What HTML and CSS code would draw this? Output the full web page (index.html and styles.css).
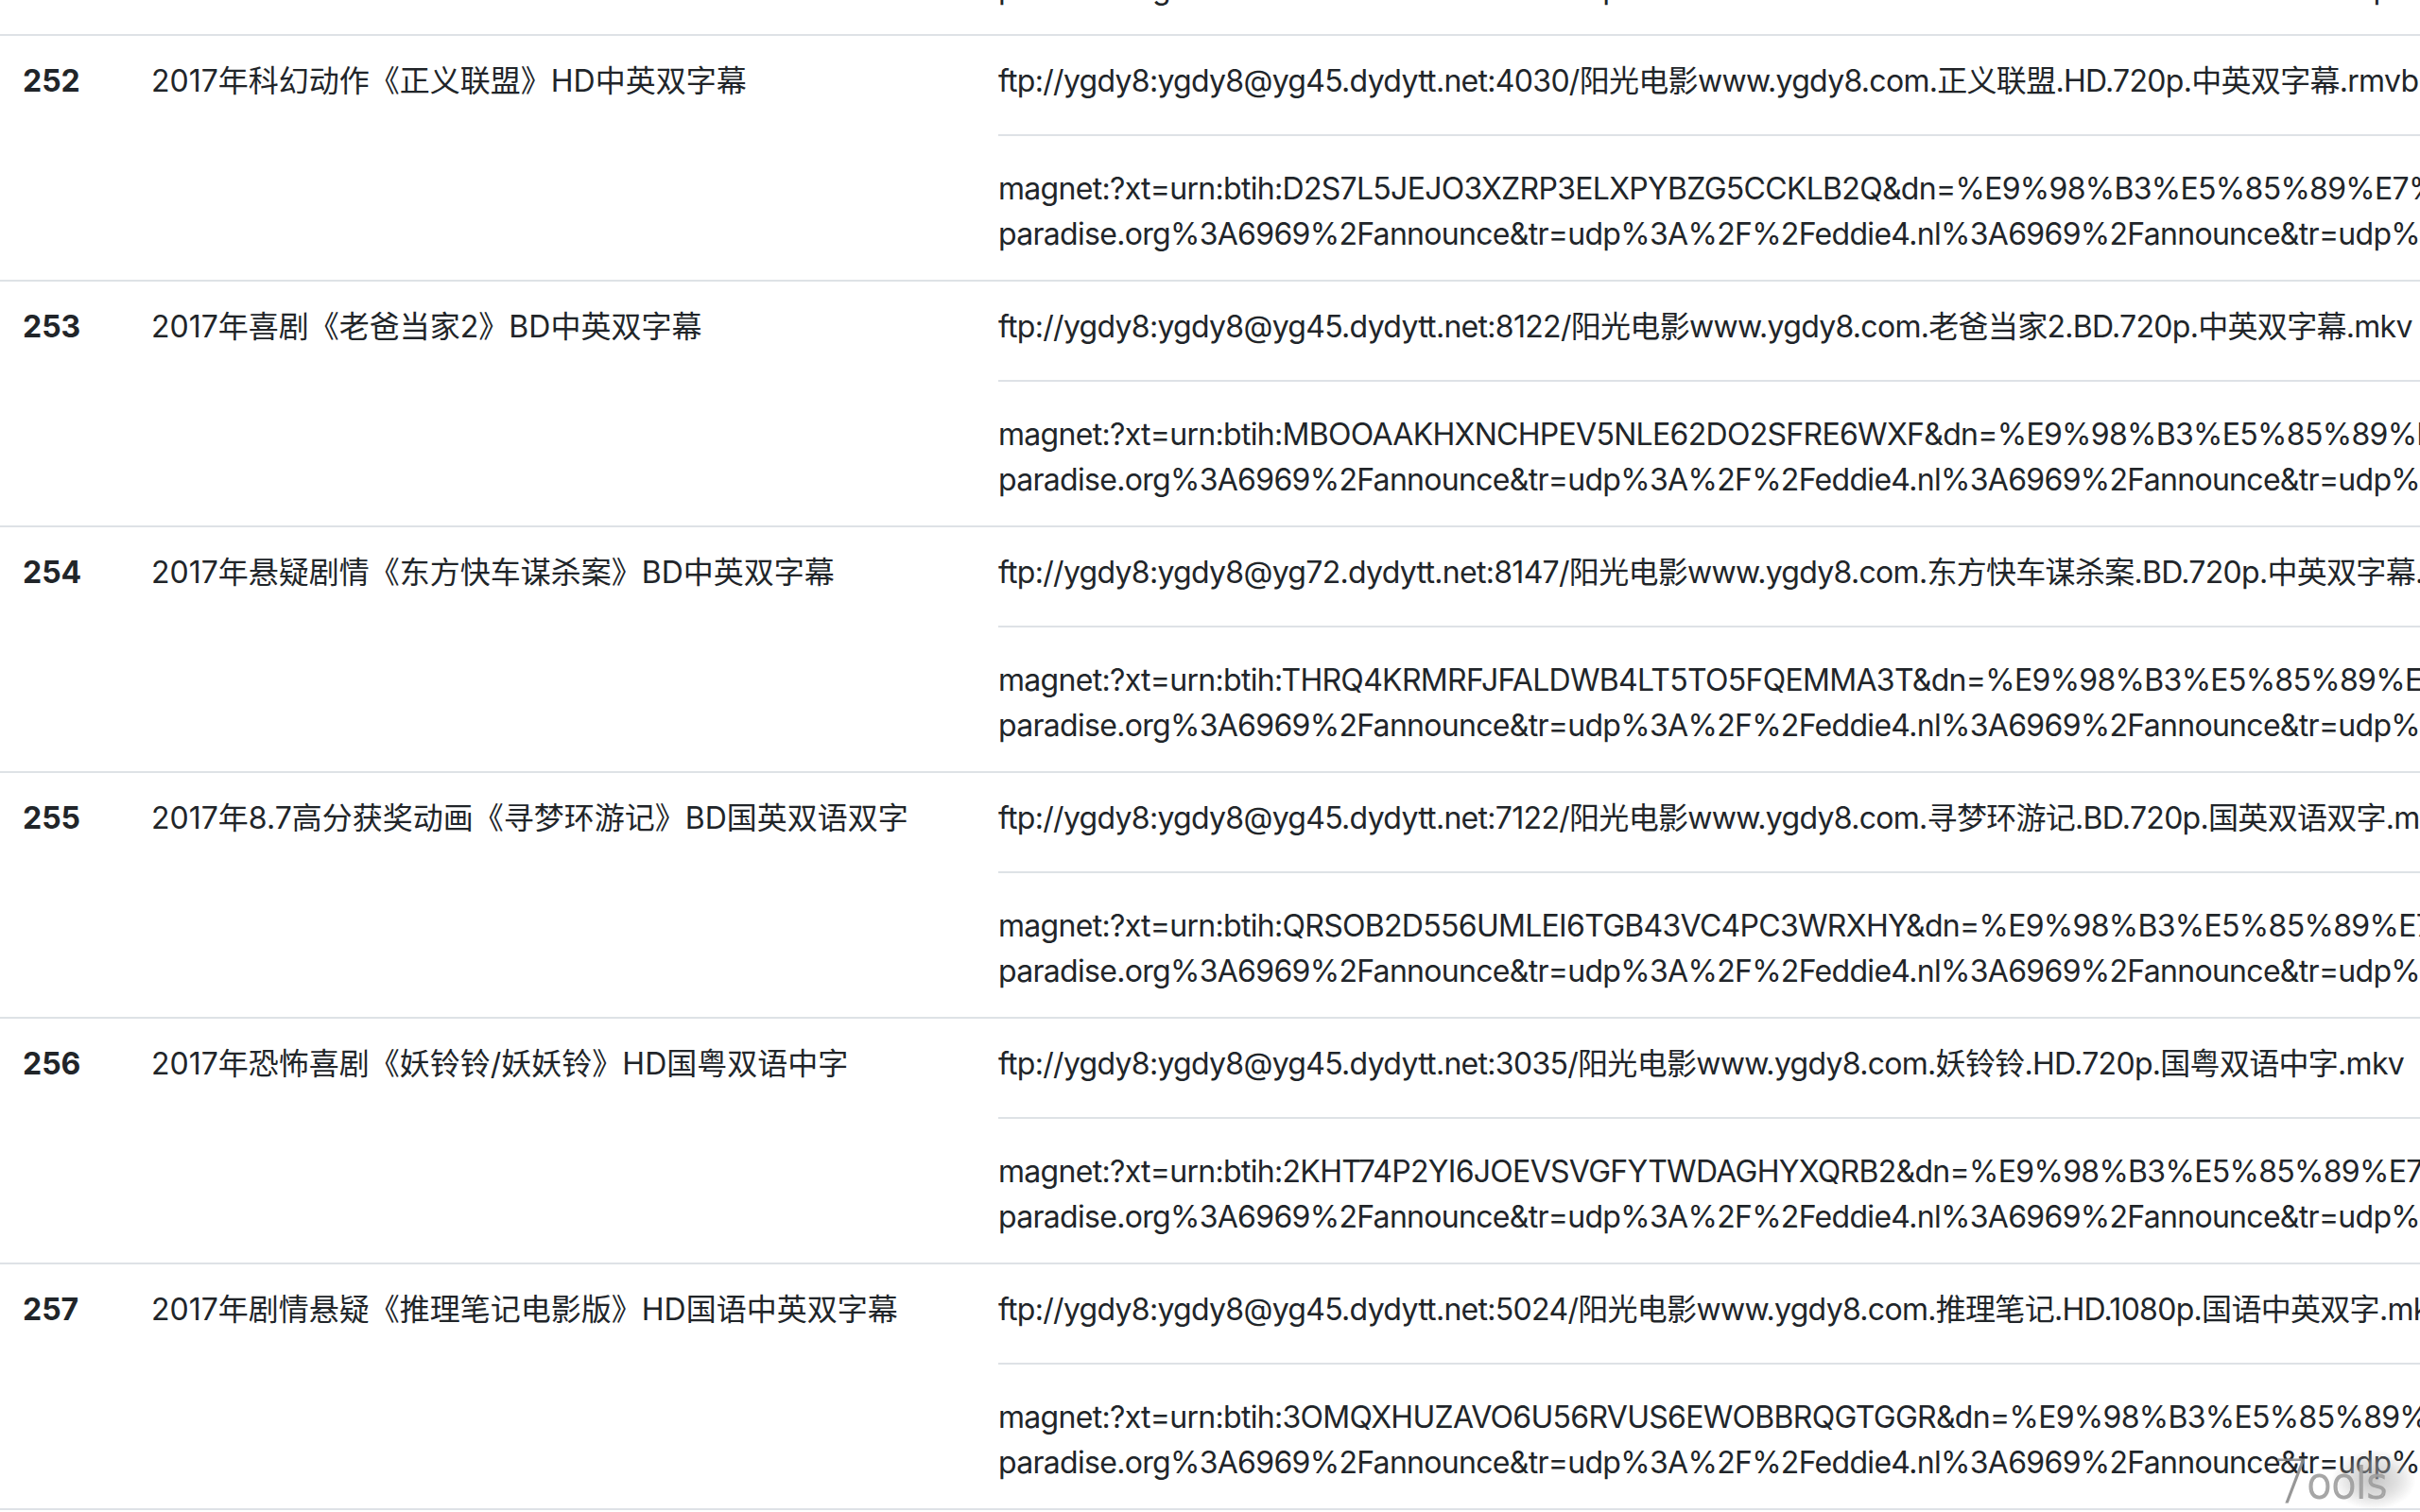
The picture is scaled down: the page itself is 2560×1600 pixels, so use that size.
FILE: index.html
```html
<!DOCTYPE html>
<html lang="zh-CN">
<head>
    <meta charset="UTF-8">
    <meta name="viewport" content="width=device-width, initial-scale=1.0">
    <title>电影下载列表</title>
    <link rel="stylesheet" href="styles.css">
</head>
<body>
    <div class="page">
        <table class="movies">
            <colgroup>
                <col class="col-num">
                <col class="col-title">
                <col class="col-links">
            </colgroup>
            <tbody>
                <tr>
                    <th>251</th>
                    <td>2017年动作奇幻《雷神3：诸神黄昏》HD中英双字幕</td>
                    <td class="links">
                        <div class="link">ftp://ygdy8:ygdy8@yg45.dydytt.net:4029/阳光电影www.ygdy8.com.雷神3：诸神黄昏.HD.720p.中英双字幕.mkv</div>
                        <div class="link">magnet:?xt=urn:btih:7YQ3LNZ4HFMB2WXKTJ6C5PRDEOVA4SGU&amp;dn=%E9%98%B3%E5%85%89%E7%94%B5%E5%BD%B1www.ygdy8.com.%E9%9B%B7%E7%A5%9E3.HD.720p.%E4%B8%AD%E8%8B%B1%E5%8F%8C%E5%AD%97%E5%B9%95.mkv&amp;tr=udp%3A%2F%2Ftracker.leechers-paradise.org%3A6969%2Fannounce&amp;tr=udp%3A%2F%2Feddie4.nl%3A6969%2Fannounce&amp;tr=udp%3A%2F%2Fp4p.arenabg.com%3A1337%2Fannounce</div>
                    </td>
                </tr>
                <tr>
                    <th>252</th>
                    <td>2017年科幻动作《正义联盟》HD中英双字幕</td>
                    <td class="links">
                        <div class="link">ftp://ygdy8:ygdy8@yg45.dydytt.net:4030/阳光电影www.ygdy8.com.正义联盟.HD.720p.中英双字幕.rmvb</div>
                        <div class="link">magnet:?xt=urn:btih:D2S7L5JEJO3XZRP3ELXPYBZG5CCKLB2Q&amp;dn=%E9%98%B3%E5%85%89%E7%94%B5%E5%BD%B1www.ygdy8.com.%E6%AD%A3%E4%B9%89%E8%81%94%E7%9B%9F.HD.720p.%E4%B8%AD%E8%8B%B1%E5%8F%8C%E5%AD%97%E5%B9%95.rmvb&amp;tr=udp%3A%2F%2Ftracker.leechers-paradise.org%3A6969%2Fannounce&amp;tr=udp%3A%2F%2Feddie4.nl%3A6969%2Fannounce&amp;tr=udp%3A%2F%2Fp4p.arenabg.com%3A1337%2Fannounce</div>
                    </td>
                </tr>
                <tr>
                    <th>253</th>
                    <td>2017年喜剧《老爸当家2》BD中英双字幕</td>
                    <td class="links">
                        <div class="link">ftp://ygdy8:ygdy8@yg45.dydytt.net:8122/阳光电影www.ygdy8.com.老爸当家2.BD.720p.中英双字幕.mkv</div>
                        <div class="link">magnet:?xt=urn:btih:MBOOAAKHXNCHPEV5NLE62DO2SFRE6WXF&amp;dn=%E9%98%B3%E5%85%89%E7%94%B5%E5%BD%B1www.ygdy8.com.%E8%80%81%E7%88%B8%E5%BD%93%E5%AE%B62.BD.720p.%E4%B8%AD%E8%8B%B1%E5%8F%8C%E5%AD%97%E5%B9%95.mkv&amp;tr=udp%3A%2F%2Ftracker.leechers-paradise.org%3A6969%2Fannounce&amp;tr=udp%3A%2F%2Feddie4.nl%3A6969%2Fannounce&amp;tr=udp%3A%2F%2Fp4p.arenabg.com%3A1337%2Fannounce</div>
                    </td>
                </tr>
                <tr>
                    <th>254</th>
                    <td>2017年悬疑剧情《东方快车谋杀案》BD中英双字幕</td>
                    <td class="links">
                        <div class="link">ftp://ygdy8:ygdy8@yg72.dydytt.net:8147/阳光电影www.ygdy8.com.东方快车谋杀案.BD.720p.中英双字幕.mkv</div>
                        <div class="link">magnet:?xt=urn:btih:THRQ4KRMRFJFALDWB4LT5TO5FQEMMA3T&amp;dn=%E9%98%B3%E5%85%89%E7%94%B5%E5%BD%B1www.ygdy8.com.%E4%B8%9C%E6%96%B9%E5%BF%AB%E8%BD%A6%E8%B0%8B%E6%9D%80%E6%A1%88.BD.720p.%E4%B8%AD%E8%8B%B1%E5%8F%8C%E5%AD%97%E5%B9%95.mkv&amp;tr=udp%3A%2F%2Ftracker.leechers-paradise.org%3A6969%2Fannounce&amp;tr=udp%3A%2F%2Feddie4.nl%3A6969%2Fannounce&amp;tr=udp%3A%2F%2Fp4p.arenabg.com%3A1337%2Fannounce</div>
                    </td>
                </tr>
                <tr>
                    <th>255</th>
                    <td>2017年8.7高分获奖动画《寻梦环游记》BD国英双语双字</td>
                    <td class="links">
                        <div class="link">ftp://ygdy8:ygdy8@yg45.dydytt.net:7122/阳光电影www.ygdy8.com.寻梦环游记.BD.720p.国英双语双字.mkv</div>
                        <div class="link">magnet:?xt=urn:btih:QRSOB2D556UMLEI6TGB43VC4PC3WRXHY&amp;dn=%E9%98%B3%E5%85%89%E7%94%B5%E5%BD%B1www.ygdy8.com.%E5%AF%BB%E6%A2%A6%E7%8E%AF%E6%B8%B8%E8%AE%B0.BD.720p.%E5%9B%BD%E8%8B%B1%E5%8F%8C%E8%AF%AD%E5%8F%8C%E5%AD%97.mkv&amp;tr=udp%3A%2F%2Ftracker.leechers-paradise.org%3A6969%2Fannounce&amp;tr=udp%3A%2F%2Feddie4.nl%3A6969%2Fannounce&amp;tr=udp%3A%2F%2Fp4p.arenabg.com%3A1337%2Fannounce</div>
                    </td>
                </tr>
                <tr>
                    <th>256</th>
                    <td>2017年恐怖喜剧《妖铃铃/妖妖铃》HD国粤双语中字</td>
                    <td class="links">
                        <div class="link">ftp://ygdy8:ygdy8@yg45.dydytt.net:3035/阳光电影www.ygdy8.com.妖铃铃.HD.720p.国粤双语中字.mkv</div>
                        <div class="link">magnet:?xt=urn:btih:2KHT74P2YI6JOEVSVGFYTWDAGHYXQRB2&amp;dn=%E9%98%B3%E5%85%89%E7%94%B5%E5%BD%B1www.ygdy8.com.%E5%A6%96%E9%93%83%E9%93%83.HD.720p.%E5%9B%BD%E7%B2%A4%E5%8F%8C%E8%AF%AD%E4%B8%AD%E5%AD%97.mkv&amp;tr=udp%3A%2F%2Ftracker.leechers-paradise.org%3A6969%2Fannounce&amp;tr=udp%3A%2F%2Feddie4.nl%3A6969%2Fannounce&amp;tr=udp%3A%2F%2Fp4p.arenabg.com%3A1337%2Fannounce</div>
                    </td>
                </tr>
                <tr>
                    <th>257</th>
                    <td>2017年剧情悬疑《推理笔记电影版》HD国语中英双字幕</td>
                    <td class="links">
                        <div class="link">ftp://ygdy8:ygdy8@yg45.dydytt.net:5024/阳光电影www.ygdy8.com.推理笔记.HD.1080p.国语中英双字.mkv</div>
                        <div class="link">magnet:?xt=urn:btih:3OMQXHUZAVO6U56RVUS6EWOBBRQGTGGR&amp;dn=%E9%98%B3%E5%85%89%E7%94%B5%E5%BD%B1www.ygdy8.com.%E6%8E%A8%E7%90%86%E7%AC%94%E8%AE%B0.HD.1080p.%E5%9B%BD%E8%AF%AD%E4%B8%AD%E8%8B%B1%E5%8F%8C%E5%AD%97.mkv&amp;tr=udp%3A%2F%2Ftracker.leechers-paradise.org%3A6969%2Fannounce&amp;tr=udp%3A%2F%2Feddie4.nl%3A6969%2Fannounce&amp;tr=udp%3A%2F%2Fp4p.arenabg.com%3A1337%2Fannounce</div>
                    </td>
                </tr>
            </tbody>
        </table>
    </div>

    <div class="watermark"><span class="splash"></span><span class="seven">7</span><span class="mark">ools</span></div>
</body>
</html>
```

FILE: styles.css
```css
html,
body {
    margin: 0;
    overflow: hidden;
    background: #fff;
}

body {
    font-family: Inter, "Noto Sans CJK SC", sans-serif;
    font-size: 32px;
    line-height: 48px;
    color: #212529;
}

/* 页面已向下滚动，上一行只露出一点 */
.page {
    margin-top: -224px;
}

.movies {
    border-collapse: collapse;
    table-layout: fixed;
    width: 7032px;
    border-bottom: 2px solid #dee2e6;
}

.col-num {
    width: 136px;
}

.col-title {
    width: 896px;
}

/* 磁力链接在 leechers- 处折行 */
.col-links {
    width: 6000px;
}

.movies th,
.movies td {
    padding: 24px;
    border-top: 2px solid #dee2e6;
    vertical-align: top;
    text-align: left;
}

.movies th {
    font-weight: 700;
}

.links {
    letter-spacing: -0.7px;
}

.links .link + .link {
    margin-top: 32px;
    padding-top: 32px;
    border-top: 2px solid #dee2e6;
}

.watermark {
    position: fixed;
    right: 4px;
    bottom: 6px;
    width: 152px;
    height: 56px;
}

.splash {
    position: absolute;
    right: 0;
    bottom: -4px;
    width: 90px;
    height: 64px;
    border-radius: 50%;
    background: radial-gradient(ellipse at center, rgba(160,160,160,0.6) 0%, rgba(180,180,180,0.4) 40%, rgba(210,210,210,0) 70%);
}

.seven {
    position: absolute;
    left: 0;
    bottom: -6px;
    font-family: "DejaVu Sans", sans-serif;
    font-weight: 200;
    font-size: 64px;
    line-height: 64px;
    color: rgba(140,140,140,0.9);
}

.mark {
    position: absolute;
    left: 36px;
    bottom: 0;
    font-family: "DejaVu Sans", sans-serif;
    font-weight: 200;
    font-size: 44px;
    line-height: 48px;
    letter-spacing: -1px;
    color: rgba(255,255,255,0.6);
    -webkit-text-stroke: 2px rgba(150,150,150,0.85);
}
```
